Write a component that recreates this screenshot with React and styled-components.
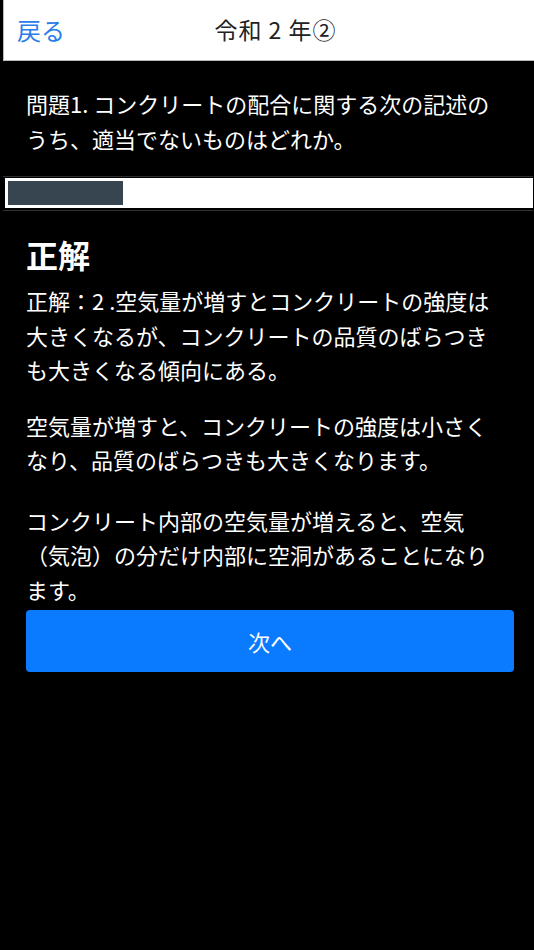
import React from "react";
import styled, { createGlobalStyle } from "styled-components";

const Global = createGlobalStyle`
  html, body { margin: 0; padding: 0; background: #000; }
  body {
    font-family: "Noto Sans CJK JP", "Noto Sans", sans-serif;
    color: #fff;
  }
  * { box-sizing: border-box; }
`;

const Page = styled.div`
  width: 534px;
  min-height: 950px;
  background: #000;
`;

const Header = styled.header`
  margin-left: 3px;
  height: 61px;
  background: #fff;
  border-left: 1px solid #b9b9b9;
  border-bottom: 1px solid #b9b9b9;
  display: grid;
  grid-template-columns: 1fr auto 1fr;
  align-items: center;
  padding: 0 0 2px 13px;
`;

const BackLink = styled.a`
  justify-self: start;
  color: #2a7de8;
  font-size: 24px;
  text-decoration: none;
  cursor: pointer;
`;

const Title = styled.h1`
  margin: 0;
  font-size: 23px;
  font-weight: 400;
  color: #222;
  letter-spacing: 1px;
`;

const Section = styled.div`
  padding: 0 20px 0 26px;
`;

const Question = styled.p`
  margin: 0;
  padding: 25px 6px 21px 0;
  font-size: 22px;
  line-height: 34.5px;
  color: #fff;
`;

const ProgressTrack = styled.div`
  margin: 0 1px 0 3px;
  border-top: 1px solid #2f2f2f;
  border-bottom: 1px solid #2f2f2f;
  padding: 1px 0 2px 2px;
`;

const ProgressBox = styled.div`
  height: 30px;
  background: #fff;
  padding: 3px;
`;

const ProgressFill = styled.div`
  height: 100%;
  background: #36454f;
`;

const AnswerTitle = styled.h2`
  margin: 24px 0 10px;
  font-size: 32px;
  line-height: 38px;
  font-weight: 700;
  color: #fff;
`;

const Paragraph = styled.p`
  margin: 0 0 ${(p) => p.$gap}px;
  padding-right: 6px;
  font-size: 22px;
  line-height: 34.5px;
  color: #fff;
`;

const NextButton = styled.button`
  display: block;
  width: 100%;
  height: 62px;
  margin-top: 4px;
  border: none;
  border-radius: 4px;
  background: #0a7bff;
  color: #fff;
  font-family: inherit;
  font-size: 22px;
  cursor: pointer;
`;

export default function App() {
  const progress = 115;
  return (
    <Page>
      <Global />
      <Header>
        <BackLink>戻る</BackLink>
        <Title>令和 2 年②</Title>
        <span />
      </Header>
      <Section>
        <Question>問題1. コンクリートの配合に関する次の記述のうち、適当でないものはどれか。</Question>
      </Section>
      <ProgressTrack>
        <ProgressBox>
          <ProgressFill style={{ width: `${progress}px` }} />
        </ProgressBox>
      </ProgressTrack>
      <Section>
        <AnswerTitle>正解</AnswerTitle>
        <Paragraph $gap={21}>
          正解：2 .空気量が増すとコンクリートの強度は大きくなるが、コンクリートの品質のばらつきも大きくなる傾向にある。
        </Paragraph>
        <Paragraph $gap={26}>
          空気量が増すと、コンクリートの強度は小さくなり、品質のばらつきも大きくなります。
        </Paragraph>
        <Paragraph $gap={0}>
          コンクリート内部の空気量が増えると、空気（気泡）の分だけ内部に空洞があることになります。
        </Paragraph>
        <NextButton>次へ</NextButton>
      </Section>
    </Page>
  );
}
